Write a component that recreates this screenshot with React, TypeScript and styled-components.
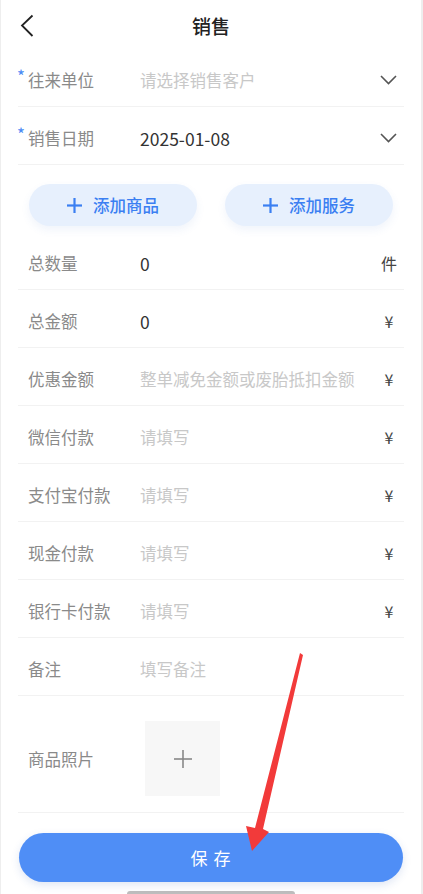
import React from "react"
import styled, { createGlobalStyle } from "styled-components"

const GlobalStyle = createGlobalStyle`
  * { box-sizing: border-box; }
  html, body {
    margin: 0;
    padding: 0;
    overflow: hidden;
    background: #fff;
    font-family: "Noto Sans CJK SC", "Noto Sans", sans-serif;
  }
`

interface FieldProps {
  label: string
  required?: boolean
  value?: string
  placeholder?: string
  unit?: string
  select?: boolean
}

const fields: FieldProps[] = [
  { label: "总数量", value: "0", unit: "件" },
  { label: "总金额", value: "0", unit: "¥" },
  { label: "优惠金额", placeholder: "整单减免金额或废胎抵扣金额", unit: "¥" },
  { label: "微信付款", placeholder: "请填写", unit: "¥" },
  { label: "支付宝付款", placeholder: "请填写", unit: "¥" },
  { label: "现金付款", placeholder: "请填写", unit: "¥" },
  { label: "银行卡付款", placeholder: "请填写", unit: "¥" },
  { label: "备注", placeholder: "填写备注" },
]

const Chevron = () => (
  <svg width="17" height="10" viewBox="0 0 17 10">
    <polyline points="1,1 8.5,8.5 16,1" fill="none" stroke="#555" strokeWidth="1.6" />
  </svg>
)

const Plus = ({ size, color, width }: { size: number; color: string; width: number }) => (
  <svg width={size} height={size} viewBox={`0 0 ${size} ${size}`}>
    <line x1={size / 2} y1="0" x2={size / 2} y2={size} stroke={color} strokeWidth={width} />
    <line x1="0" y1={size / 2} x2={size} y2={size / 2} stroke={color} strokeWidth={width} />
  </svg>
)

const Field: React.FC<FieldProps> = ({ label, required, value, placeholder, unit, select }) => (
  <Row>
    <Label>
      {required && <Star>*</Star>}
      {label}
    </Label>
    <Value $empty={!value}>{value || placeholder}</Value>
    {unit && <Unit>{unit}</Unit>}
    {select && <Chevron />}
  </Row>
)

export default function App() {
  return (
    <Page>
      <GlobalStyle />
      <Header>
        <BackBtn>
          <svg width="14" height="24" viewBox="0 0 14 24">
            <polyline points="12.5,1.5 2,11.5 12.5,22" fill="none" stroke="#222" strokeWidth="1.8" />
          </svg>
        </BackBtn>
        <Title>销售</Title>
        <span />
      </Header>

      <Form>
        <Field label="往来单位" required placeholder="请选择销售客户" select />
        <Field label="销售日期" required value="2025-01-08" select />

        <Actions>
          <AddButton>
            <Plus size={15} color="#3b7ff2" width={2.2} />
            添加商品
          </AddButton>
          <AddButton>
            <Plus size={15} color="#3b7ff2" width={2.2} />
            添加服务
          </AddButton>
        </Actions>

        {fields.map((f) => (
          <Field key={f.label} {...f} />
        ))}

        <PhotoRow>
          <Label>商品照片</Label>
          <PhotoBox>
            <Plus size={18} color="#888" width={1.6} />
          </PhotoBox>
        </PhotoRow>
      </Form>

      <Footer>
        <SaveButton>保 存</SaveButton>
      </Footer>
      <HomeBar />

      <Annotation width="423" height="894" viewBox="0 0 423 894">
        <polygon
          points="300,653 303,655 263,829 269,832 252,851 246,826 255,828"
          fill="#f23a3a"
        />
      </Annotation>
    </Page>
  )
}

const Page = styled.div`
  position: relative;
  width: 423px;
  height: 894px;
  overflow: hidden;
  background: #fff;
  border-left: 1px solid #eeeeee;
  border-right: 2px solid #eeeeee;
`

const Header = styled.header`
  height: 49px;
  display: grid;
  grid-template-columns: 60px 1fr 60px;
  align-items: center;
  padding-top: 2px;
`

const BackBtn = styled.div`
  display: flex;
  align-items: center;
  padding-left: 19px;
`

const Title = styled.h1`
  margin: 0;
  text-align: center;
  font-size: 19px;
  font-weight: 500;
  color: #222;
`

const Form = styled.div`
  padding: 0 17px;
  display: flex;
  flex-direction: column;
`

const Row = styled.div`
  height: 58px;
  flex-shrink: 0;
  display: flex;
  align-items: center;
  padding: 5px 7px 0 10px;
  border-bottom: 1px solid #f2f2f2;
`

const Label = styled.div`
  position: relative;
  width: 112px;
  flex-shrink: 0;
  font-size: 16.5px;
  color: #8a8a8a;
  display: flex;
  align-items: center;
`

const Star = styled.span`
  position: absolute;
  left: -11px;
  top: -5px;
  color: #4b8bf5;
  font-size: 17px;
`

const Value = styled.div<{ $empty: boolean }>`
  flex: 1;
  font-size: ${(p) => (p.$empty ? "16.5px" : "17.5px")};
  color: ${(p) => (p.$empty ? "#c8c8c8" : "#333")};
  white-space: nowrap;
`

const Unit = styled.span`
  width: 16px;
  text-align: center;
  font-size: 16px;
  color: #444;
`

const Actions = styled.div`
  height: 67px;
  flex-shrink: 0;
  display: flex;
  justify-content: center;
  gap: 28px;
  padding-top: 19px;
`

const AddButton = styled.button`
  width: 168px;
  height: 42px;
  border: none;
  border-radius: 21px;
  background: #e7f0fd;
  color: #3b7ff2;
  font-family: inherit;
  font-size: 16.5px;
  font-weight: 500;
  display: flex;
  align-items: center;
  justify-content: center;
  gap: 11px;
  box-shadow: 0 4px 8px rgba(60, 110, 200, 0.08);
`

const PhotoRow = styled.div`
  flex-shrink: 0;
  display: flex;
  align-items: center;
  padding: 25px 7px 16px 10px;
  border-bottom: 1px solid #f2f2f2;
`

const PhotoBox = styled.div`
  width: 75px;
  height: 75px;
  margin-left: 5px;
  background: #f7f7f7;
  display: flex;
  align-items: center;
  justify-content: center;
`

const Footer = styled.div`
  padding: 20px 18px 0 18px;
`

const SaveButton = styled.button`
  width: 100%;
  height: 49px;
  border: none;
  border-radius: 25px;
  background: #4f8ef6;
  color: #fff;
  font-family: inherit;
  font-size: 17px;
  letter-spacing: 1px;
  box-shadow: 0 3px 8px rgba(40, 90, 180, 0.15);
`

const HomeBar = styled.div`
  width: 168px;
  height: 6px;
  margin: 9px auto 0;
  border-radius: 3px;
  background: #bdbdbd;
`

const Annotation = styled.svg`
  position: absolute;
  left: -1px;
  top: 0;
  pointer-events: none;
`
